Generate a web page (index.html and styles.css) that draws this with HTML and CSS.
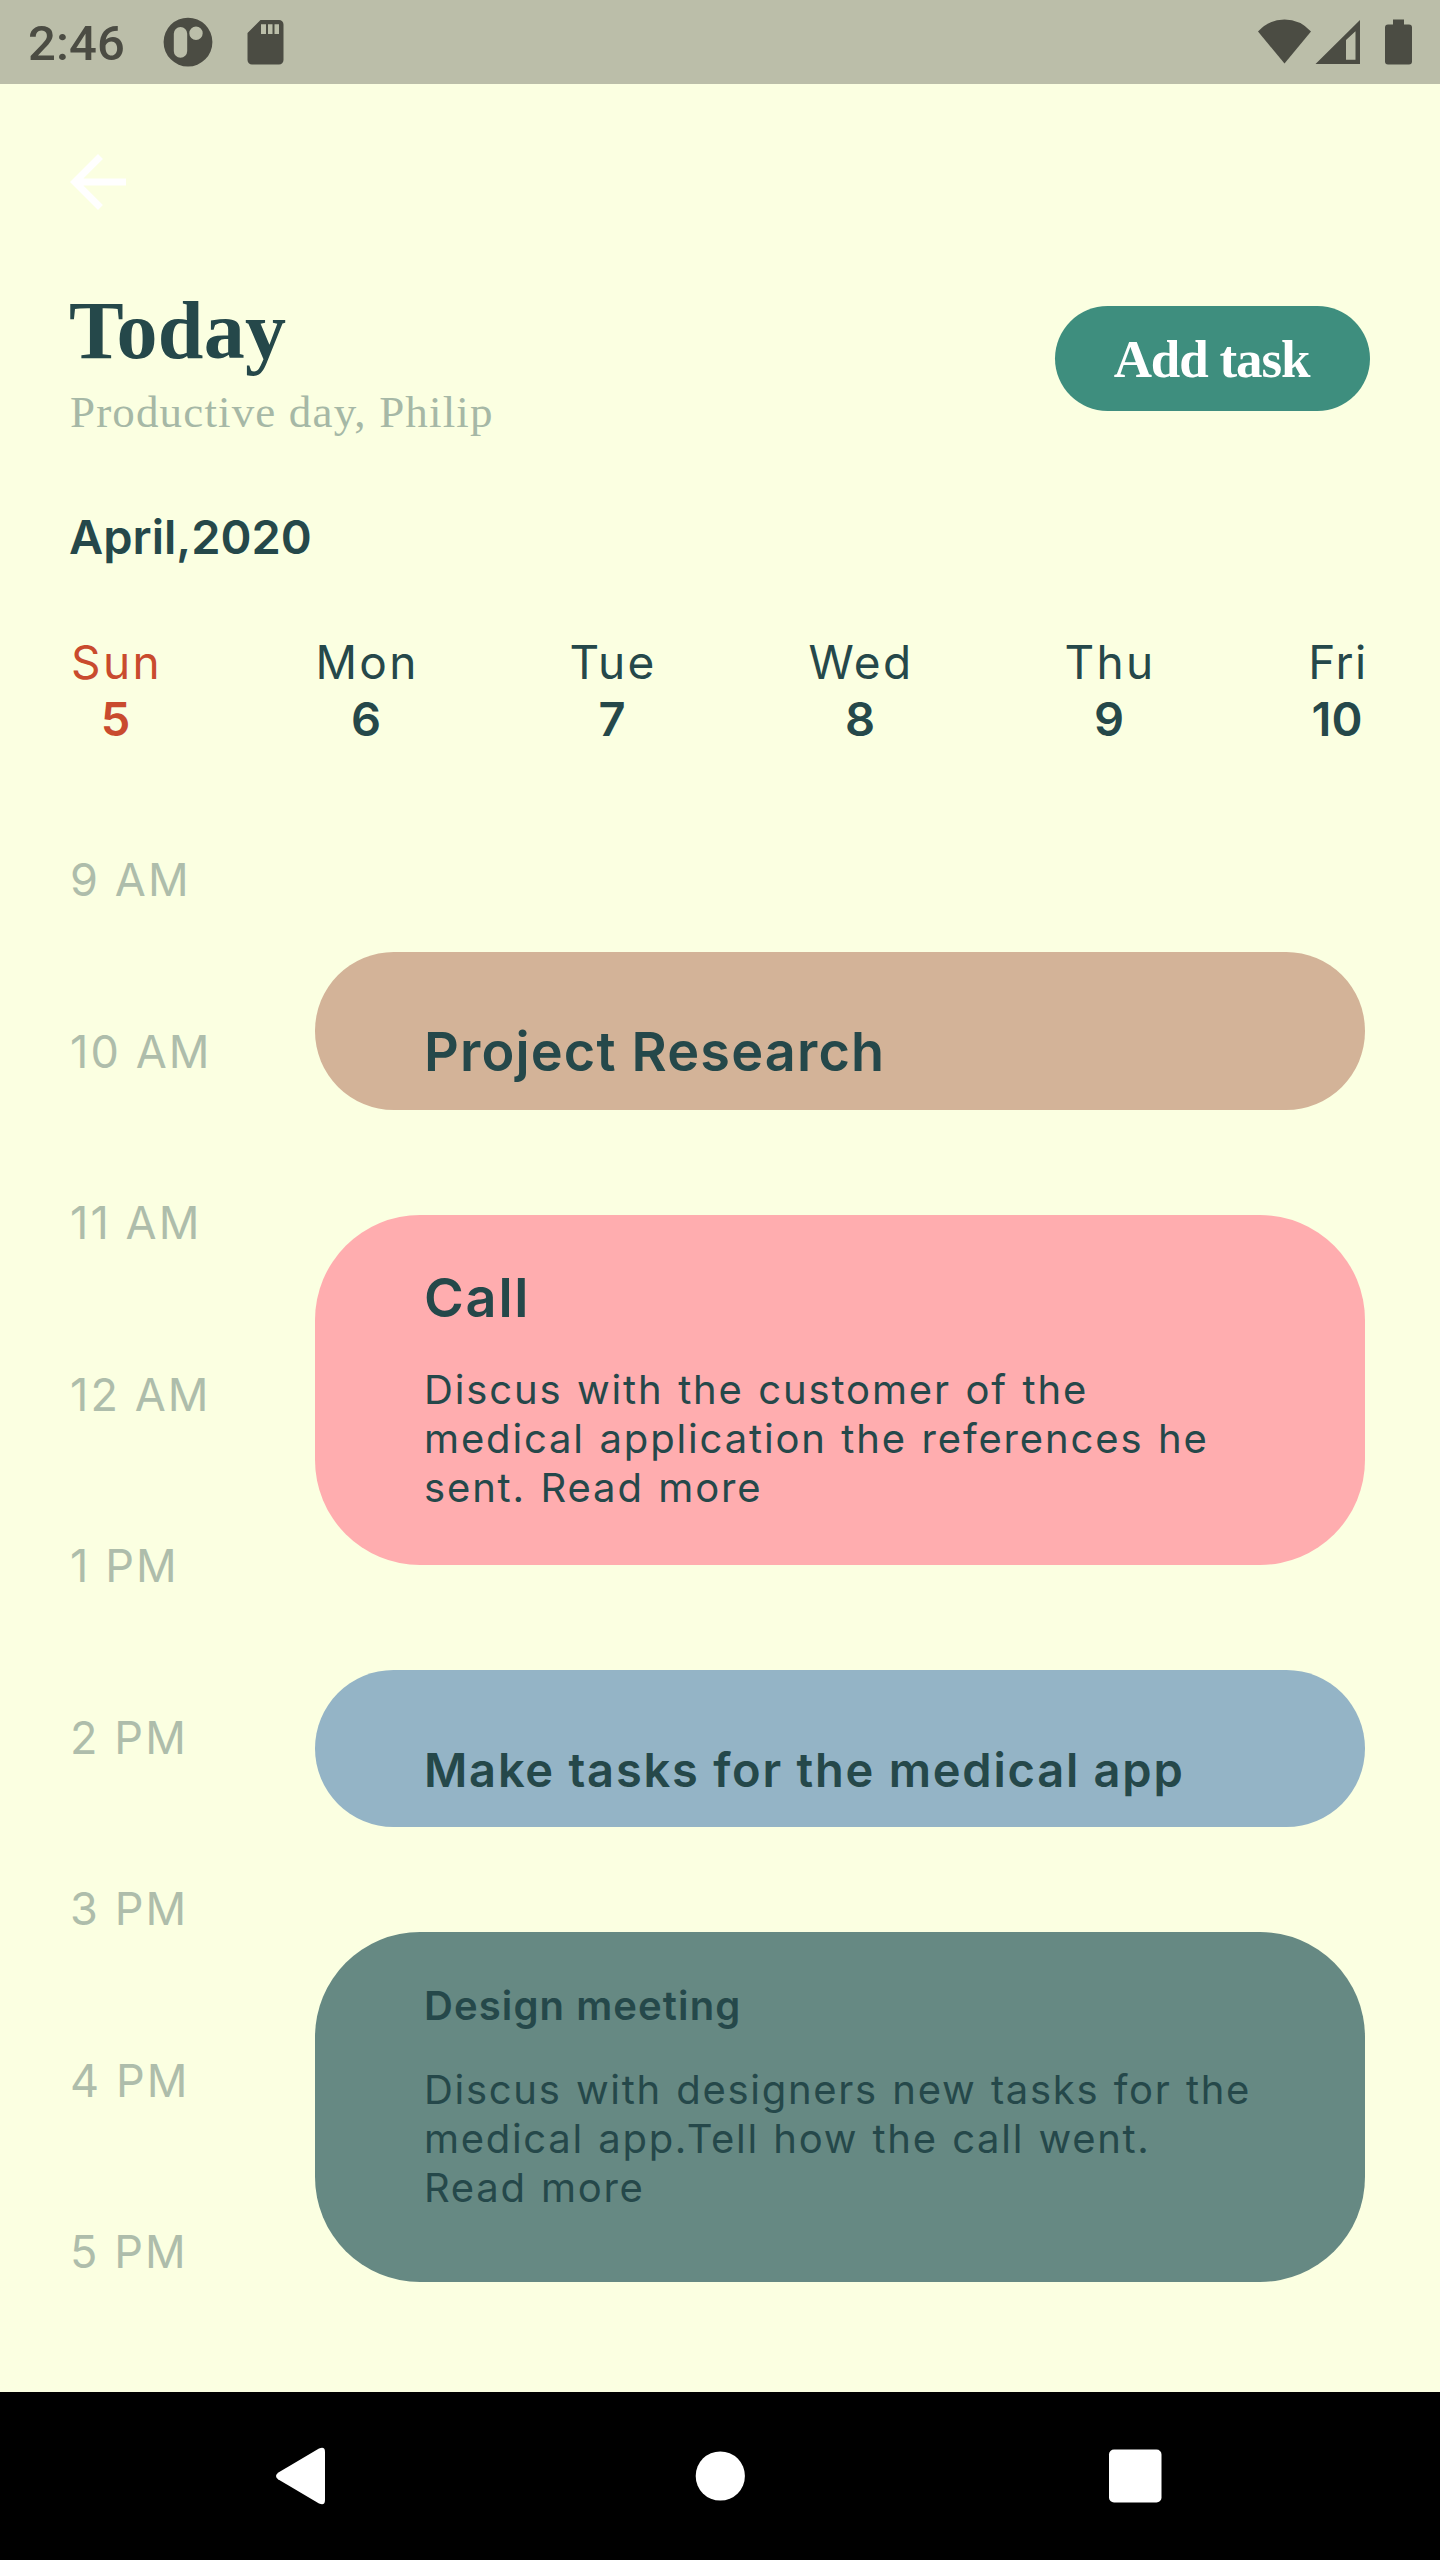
FILE: index.html
```
<!DOCTYPE html>
<html lang="en">
<head>
<meta charset="utf-8">
<title>Today</title>
<link rel="stylesheet" href="styles.css">
</head>
<body>
<div class="screen">
  <div class="status">
    <span class="clock">2:46</span>
    <svg class="icon-app" width="50" height="50" viewBox="0 0 50 50"><path fill-rule="evenodd" d="M25 .7a24.4 24.4 0 1 0 0 48.8a24.4 24.4 0 1 0 0-48.8zM17.5 10a6.7 6.7 0 0 1 6.7 6.7v17.4a6.7 6.7 0 0 1-13.4 0V16.700a6.7 6.7 0 0 1 6.700-6.700zM33 9.500a6.700 6.700 0 1 1 0 13.400a6.700 6.700 0 1 1 0-13.400z"/></svg>
    <svg class="icon-sd" width="37" height="46" viewBox="0 0 37 46"><path fill-rule="evenodd" d="M13.500 1H32a4.500 4.500 0 0 1 4.500 4.500V41a4.500 4.500 0 0 1-4.500 4.500H5A4.500 4.500 0 0 1 .5 41V14zM14 5.300V15h5V5.300zM21 5.300V15h4.500V5.300zM27.500 5.300V15H32V5.300z"/></svg>
    <div class="system">
      <svg width="53" height="46" viewBox="0 0 53 46"><path d="M0 12.500Q11 .5 26.500 .5T53 12.500L26.500 44.500z"/></svg>
      <svg class="icon-signal" width="46" height="46" viewBox="0 0 46 46"><path fill-rule="evenodd" d="M45 1V45H.5zM31 21V40.800H40.500V12.200z"/></svg>
      <svg class="icon-battery" width="27" height="46" viewBox="0 0 27 46"><path d="M8 .5H19V5.500H24a3 3 0 0 1 3 3V42.500a3 3 0 0 1-3 3H3a3 3 0 0 1-3-3V8.500a3 3 0 0 1 3-3H8z"/></svg>
    </div>
  </div>

  <main class="content">
    <svg class="back" width="84" height="84" viewBox="0 0 24 24"><path d="M20 11H7.830l5.590-5.590L12 4l-8 8 8 8 1.410-1.410L7.830 13H20v-2z"/></svg>

    <header class="header">
      <div>
        <h1 class="title">Today</h1>
        <p class="subtitle">Productive day, Philip</p>
      </div>
      <button class="add">Add task</button>
    </header>

    <h2 class="month">April,2020</h2>

    <div class="days">
      <div class="day day-sun"><span class="name">Sun</span><b class="num">5</b></div>
      <div class="day day-mon"><span class="name">Mon</span><b class="num">6</b></div>
      <div class="day day-tue"><span class="name">Tue</span><b class="num">7</b></div>
      <div class="day day-wed"><span class="name">Wed</span><b class="num">8</b></div>
      <div class="day day-thu"><span class="name">Thu</span><b class="num">9</b></div>
      <div class="day day-fri"><span class="name">Fri</span><b class="num">10</b></div>
    </div>

    <section class="schedule">
      <div class="hours">
        <span>9 AM</span><span>10 AM</span><span>11 AM</span><span>12 AM</span><span>1 PM</span><span>2 PM</span><span>3 PM</span><span>4 PM</span><span>5 PM</span>
      </div>
      <div class="tasks">
        <article class="task short research"><h3>Project Research</h3></article>
        <article class="task long call"><h3>Call</h3><p>Discus with the customer of the<br>medical application the references he<br>sent. Read more</p></article>
        <article class="task short medical"><h3>Make tasks for the medical app</h3></article>
        <article class="task long meeting"><h3>Design meeting</h3><p>Discus with designers new tasks for the<br>medical app.Tell how the call went.<br>Read more</p></article>
      </div>
    </section>
  </main>

  <nav class="nav">
    <svg width="56" height="60" viewBox="0 0 56 60"><path d="M6 26.700L47 2.600Q53 0 53 6V54Q53 60 47 57.400L6 33.300Q2 30 6 26.700z"/></svg>
    <svg width="56" height="60" viewBox="0 0 56 60"><circle cx="30.300" cy="30" r="24.600"/></svg>
    <svg width="56" height="60" viewBox="0 0 56 60"><rect x="2" y="3.500" width="52.500" height="53" rx="5"/></svg>
  </nav>
</div>
</body>
</html>
```
FILE: styles.css
```
* { box-sizing: border-box; }
body { margin: 0; }
h1, h2, h3, p { margin: 0; }
svg { display: block; flex: none; }

.screen {
  display: flex;
  flex-direction: column;
  width: 1440px;
  height: 2560px;
  background: #fbffe1;
  color: #25484a;
  font-family: Inter, "Liberation Sans", sans-serif;
}

/* System status bar */
.status {
  display: flex;
  align-items: flex-start;
  height: 84px;
  padding: 18px 28px 0 28px;
  background: #bbbea9;
  fill: #4b4c43;
  color: #4b4c43;
}
.clock {
  width: 135px;
  margin-top: -4px;
  font: 500 49px/60px Roboto, sans-serif;
  letter-spacing: 0.1px;
}
.icon-app { margin-top: -1px; }
.icon-sd { margin: 1px 0 0 34px; }
.system { display: flex; margin: 0.500px 0 0 auto; }
.icon-signal { margin-left: 4px; }
.icon-battery { margin-left: 24px; }

.content { flex: 1; padding: 56px 70px 0; }
.back { margin-left: -14px; fill: #fff; }

.header {
  display: flex;
  justify-content: space-between;
  margin-top: 65px;
}
.title {
  margin-left: -1px;
  font: bold 82px/84px "Liberation Serif", serif;
  letter-spacing: 0.3px;
}
.subtitle {
  margin: 11px 0 0;
  font: 45px/56px "Liberation Serif", serif;
  letter-spacing: 1.150px;
  color: #a6b8a6;
}
.add {
  width: 315px;
  height: 105px;
  margin-top: 17px;
  padding: 0 2px 0 0;
  border: 0;
  border-radius: 52.500px;
  background: #3e8e7e;
  color: #fff;
  font: bold 53px/106px "Liberation Serif", serif;
  letter-spacing: -1.150px;
}
.month {
  margin: 67px 0 0 -1px;
  font-size: 47px;
  font-weight: 600;
  line-height: 60px;
}

.days {
  display: flex;
  gap: 152px;
  margin-top: 68px;
}
.day { flex: none; text-align: center; line-height: 56px; }
.name, .num { display: block; }
.name { font-size: 46px; letter-spacing: 2.300px; margin: 0 -6px 0 -4px; line-height: 55px; padding-bottom: 1px; }
.num { font-size: 47px; font-weight: 600; }
.day-sun { width: 91px; color: #c94b2e; }
.day-mon { width: 106px; }
.day-tue { width: 82px; }
.day-wed { width: 110px; }
.day-thu { width: 84px; }
.day-fri { width: 68px; }
.day-fri .name { letter-spacing: 1.500px; }

.schedule { display: flex; margin-top: 103px; }
.hours {
  display: flex;
  flex-direction: column;
  gap: 111.500px;
  width: 245px;
  font-size: 45px;
  line-height: 59px;
  row-gap: 112.500px;
  letter-spacing: 2.100px;
  color: #aebdab;
}
.tasks {
  display: flex;
  flex-direction: column;
  gap: 105px;
  width: 1050px;
  padding-top: 102px;
}
.task { padding-left: 109px; }
.task h3 { font-weight: 600; }
.task p {
  font-size: 40px;
  line-height: 49px;
  letter-spacing: 1.700px;
  word-spacing: 1.500px;
}
.short { height: 157.500px; border-radius: 78.750px; }
.long { height: 350px; border-radius: 105px; }
.research { padding-top: 67px; background: #d3b398; }
.research h3 { font-size: 54px; line-height: 66px; letter-spacing: 1.170px; }
.call { padding-top: 50px; background: #ffadaf; }
.call h3 { font-size: 54px; line-height: 66px; letter-spacing: 1.800px; margin-bottom: 34px; }
.call p { letter-spacing: 1.850px; }
.medical { padding-top: 72px; background: #94b4c6; }
.medical h3 { font-size: 47px; line-height: 56px; letter-spacing: 1.770px; }
.meeting { padding-top: 49.500px; background: #668983; }
.meeting h3 { font-size: 40px; line-height: 48px; letter-spacing: 1.100px; margin-bottom: 35px; }

/* System navigation */
.nav {
  display: flex;
  align-items: center;
  justify-content: space-between;
  height: 168px;
  padding: 0 277px 0 272px;
  background: #000;
  fill: #fff;
}
```
